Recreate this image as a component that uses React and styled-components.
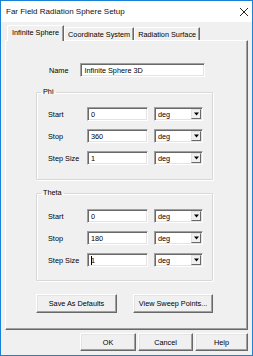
import React from "react";
import styled, { createGlobalStyle } from "styled-components";

const GlobalStyle = createGlobalStyle`
	html, body {
		margin: 0;
		padding: 0;
		background: #ffffff;
	}
	body {
		font-family: "Liberation Sans", Arial, sans-serif;
		font-size: 7.3px;
		color: #000;
	}
`;

const Window = styled.div`
	width: 253px;
	height: 356px;
	box-sizing: border-box;
	border: 1px solid #1a82d6;
	background: #f0f0f0;
	display: flex;
	flex-direction: column;
`;

const TitleBar = styled.div`
	height: 21px;
	background: #ffffff;
	display: flex;
	align-items: center;
	justify-content: space-between;
	padding: 0 3px 0 5px;
	font-size: 8px;
	color: #111;
`;

const Body = styled.div`
	flex: 1;
	display: flex;
	flex-direction: column;
	padding: 0 4px;
`;

const TabStrip = styled.div`
	height: 18px;
	display: flex;
	align-items: flex-end;
	padding-left: 2px;
	position: relative;
	z-index: 1;
`;

const Tab = styled.div`
	box-sizing: border-box;
	height: ${ p => p.$active ? "16px" : "13px" };
	margin-bottom: ${ p => p.$active ? "-1px" : "0" };
	padding: 0 ${ p => p.$active ? "4px" : "3px" };
	padding-bottom: ${ p => p.$active ? "2px" : "0" };
	display: flex;
	align-items: center;
	background: #f0f0f0;
	border-left: 1px solid #ffffff;
	border-top: 1px solid #ffffff;
	border-right: 1px solid #696969;
	box-shadow: inset -1px 0 0 #a0a0a0;
	white-space: nowrap;
`;

const Panel = styled.div`
	height: 290px;
	box-sizing: border-box;
	border-left: 1px solid #ffffff;
	border-top: 1px solid #ffffff;
	border-right: 1px solid #696969;
	border-bottom: 1px solid #696969;
	box-shadow: inset -1px -1px 0 #a0a0a0;
	display: flex;
	flex-direction: column;
`;

const NameRow = styled.div`
	display: flex;
	align-items: center;
	margin-top: 22px;
	padding-left: 43px;
	gap: 12px;
`;

const TextInput = styled.div`
	box-sizing: border-box;
	width: ${ p => p.$w }px;
	height: 14px;
	background: #ffffff;
	border-top: 1px solid #a0a0a0;
	border-left: 1px solid #a0a0a0;
	border-right: 1px solid #ffffff;
	border-bottom: 1px solid #ffffff;
	box-shadow: inset 1px 1px 0 #696969, inset -1px -1px 0 #e3e3e3;
	display: flex;
	align-items: center;
	padding-left: 3px;
	white-space: nowrap;
`;

const Caret = styled.span`
	display: inline-block;
	width: 1px;
	height: 9px;
	background: #000;
	margin-right: -1px;
`;

const Group = styled.fieldset`
	margin: ${ p => p.$top }px 0 0 30px;
	width: 177px;
	box-sizing: border-box;
	height: 93px;
	padding: ${ p => p.$pad }px 0 0 0;
	border: 1px solid #d8d8d8;
	box-shadow: 1px 1px 0 #ffffff, inset 1px 1px 0 #ffffff;
	border-radius: 1px;
	display: flex;
	flex-direction: column;
	gap: 8px;
`;

const Legend = styled.legend`
	margin-left: 4px;
	padding: 0 2px;
	line-height: 10px;
	height: 10px;
`;

const FieldRow = styled.div`
	display: flex;
	align-items: center;
	height: 14px;
	padding-left: 11px;
`;

const FieldLabel = styled.span`
	width: 39px;
`;

const Combo = styled.div`
	box-sizing: border-box;
	width: 49px;
	height: 14px;
	margin-left: 6px;
	background: #ffffff;
	border-top: 1px solid #a0a0a0;
	border-left: 1px solid #a0a0a0;
	border-right: 1px solid #ffffff;
	border-bottom: 1px solid #ffffff;
	box-shadow: inset 1px 1px 0 #696969, inset -1px -1px 0 #e3e3e3;
	display: flex;
	align-items: stretch;
	padding: 1px;
`;

const ComboText = styled.span`
	flex: 1;
	display: flex;
	align-items: center;
	padding-left: 2px;
`;

const DropButton = styled.div`
	width: 10px;
	box-sizing: border-box;
	background: #f0f0f0;
	border-top: 1px solid #e3e3e3;
	border-left: 1px solid #e3e3e3;
	border-right: 1px solid #696969;
	border-bottom: 1px solid #696969;
	display: flex;
	align-items: center;
	justify-content: center;
`;

const ButtonRow = styled.div`
	display: flex;
	margin: 13px 0 0 30px;
	width: 177px;
	justify-content: space-between;
`;

const Button = styled.div`
	box-sizing: border-box;
	width: ${ p => p.$w }px;
	height: ${ p => p.$h || 18 }px;
	background: #f0f0f0;
	border-top: 1px solid #ffffff;
	border-left: 1px solid #ffffff;
	border-right: 1px solid #696969;
	border-bottom: 1px solid #696969;
	box-shadow: inset -1px -1px 0 #a0a0a0, inset 1px 1px 0 #e3e3e3;
	display: flex;
	align-items: center;
	justify-content: center;
	white-space: nowrap;
`;

const Footer = styled.div`
	display: flex;
	justify-content: flex-end;
	gap: 2px;
	margin-top: 3px;
`;

const CloseIcon = () => (
	<svg width="10" height="10" viewBox="0 0 10 10">
		<path d="M1 1 L9 9 M9 1 L1 9" stroke="#222" strokeWidth="1" fill="none" />
	</svg>
);

const ArrowDown = () => (
	<svg width="5" height="4" viewBox="0 0 5 4">
		<polygon points="0,0.5 5,0.5 2.5,3.5" fill="#000" />
	</svg>
);

const Field = ( { label, value, caret } ) => (
	<FieldRow>
		<FieldLabel>{label}</FieldLabel>
		<TextInput $w={61}>{caret ? <Caret /> : null}{value}</TextInput>
		<Combo>
			<ComboText>deg</ComboText>
			<DropButton><ArrowDown /></DropButton>
		</Combo>
	</FieldRow>
);

export default function App() {
	return (
		<>
			<GlobalStyle />
			<Window>
				<TitleBar>
					<span>Far Field Radiation Sphere Setup</span>
					<CloseIcon />
				</TitleBar>
				<Body>
					<TabStrip>
						<Tab $active>Infinite Sphere</Tab>
						<Tab>Coordinate System</Tab>
						<Tab>Radiation Surface</Tab>
					</TabStrip>
					<Panel>
						<NameRow>
							<span>Name</span>
							<TextInput $w={125}>Infinite Sphere 3D</TextInput>
						</NameRow>
						<Group $top={10} $pad={10}>
							<Legend>Phi</Legend>
							<Field label="Start" value="0" />
							<Field label="Stop" value="360" />
							<Field label="Step Size" value="1" />
						</Group>
						<Group $top={8} $pad={11}>
							<Legend>Theta</Legend>
							<Field label="Start" value="0" />
							<Field label="Stop" value="180" />
							<Field label="Step Size" value="1" caret />
						</Group>
						<ButtonRow>
							<Button $w={81} $h={19}>Save As Defaults</Button>
							<Button $w={80} $h={19}>View Sweep Points...</Button>
						</ButtonRow>
					</Panel>
					<Footer>
						<Button $w={56}>OK</Button>
						<Button $w={55}>Cancel</Button>
						<Button $w={53}>Help</Button>
					</Footer>
				</Body>
			</Window>
		</>
	);
}
